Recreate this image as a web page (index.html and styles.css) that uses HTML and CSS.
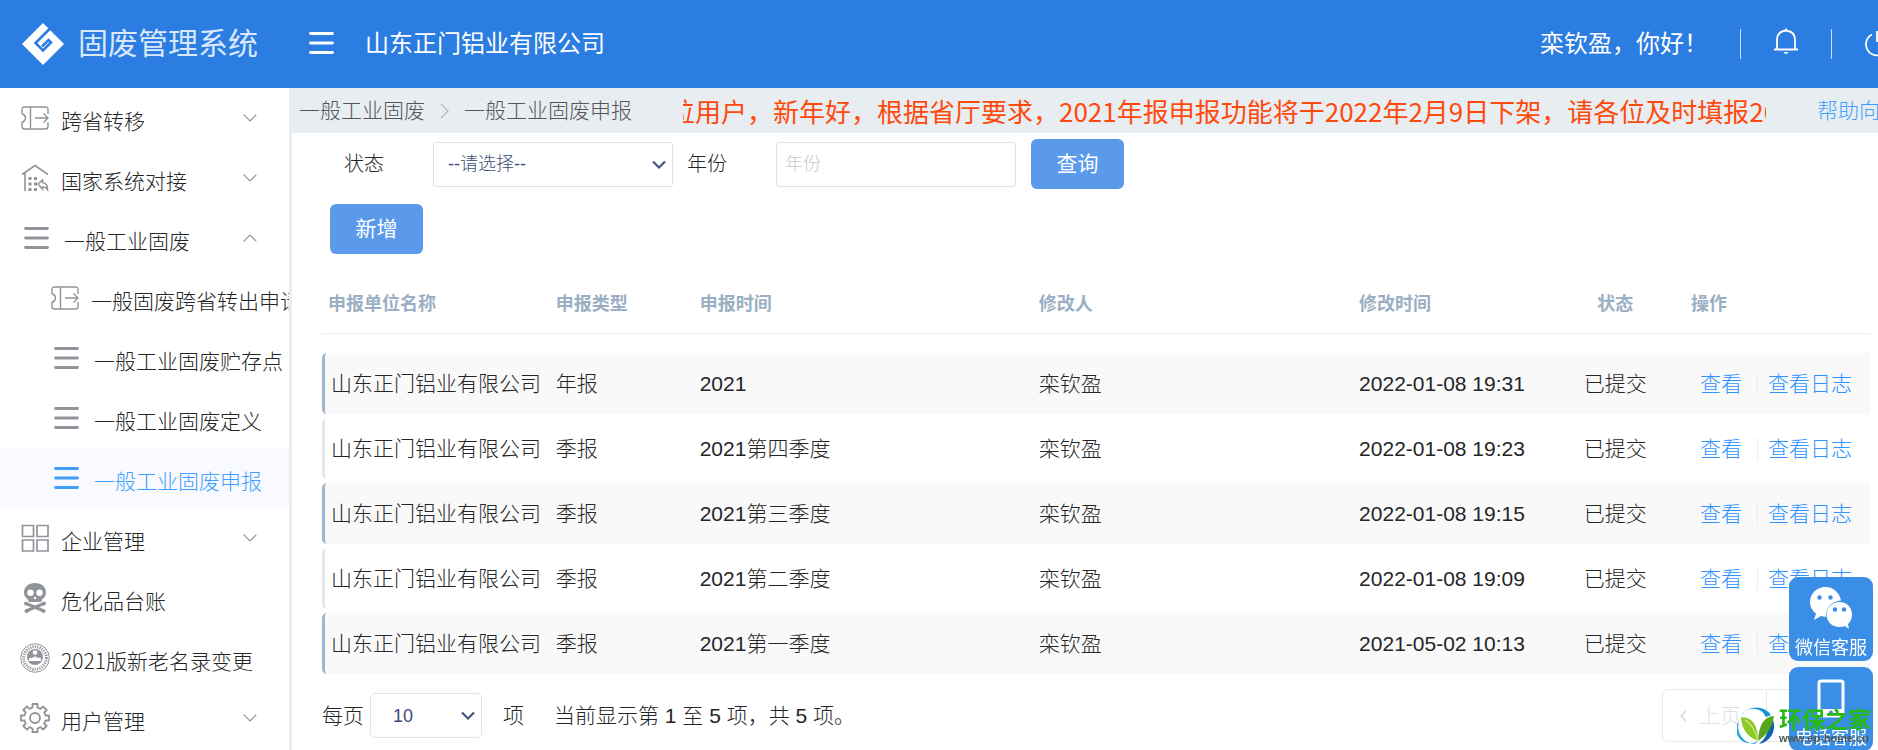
FILE: index.html
```html
<!DOCTYPE html>
<html lang="zh-CN">
<head>
<meta charset="utf-8">
<title>固废管理系统</title>
<link rel="stylesheet" href="styles.css">
</head>
<body>
<svg class="defs" aria-hidden="true">
  <symbol id="i-ticket" viewBox="0 0 28 24"><path d="M27 8V3.500Q27 1 24.500 1h-21Q1 1 1 3.500v4Q4.500 9 4.500 12T1 16.500v4Q1 23 3.500 23h21q2.500 0 2.500-2.500V16M9.500 1v22M14 12h13M22.500 7.500 27 12l-4.500 4.500" fill="none" stroke="currentColor" stroke-width="1.400"/></symbol>
  <symbol id="i-bars" viewBox="0 0 25 24"><path d="M1.500 2.500h22M1.500 12h22M1.500 21.500h22" fill="none" stroke="currentColor" stroke-width="2.800" stroke-linecap="round"/></symbol>
  <symbol id="i-down" viewBox="0 0 14 8"><path d="m.7.7 6.300 6.300L13.300.7" fill="none" stroke="currentColor" stroke-width="1.200"/></symbol>
  <symbol id="i-up" viewBox="0 0 14 8"><path d="M.7 7.300 7 1l6.300 6.300" fill="none" stroke="currentColor" stroke-width="1.200"/></symbol>
  <symbol id="i-caret" viewBox="0 0 14 9"><path d="m1 1.500 6 6 6-6" fill="none" stroke="currentColor" stroke-width="2.200"/></symbol>
</svg>

<header class="header">
  <svg class="logo" viewBox="0 0 42 42" aria-hidden="true"><path d="M21 0 42 21 21 42 0 21Z" fill="#fff"/><path d="M28 5.500 13.500 20 21 27.500 29 19.500 26.500 17 20 23.500" fill="none" stroke="#2b7de1" stroke-width="2.600"/></svg>
  <h1 class="brand">固废管理系统</h1>
  <button class="toggle" aria-label="菜单"><svg viewBox="0 0 25 24"><use href="#i-bars"/></svg></button>
  <span class="company">山东正门铝业有限公司</span>
  <div class="account">
    <span>栾钦盈，你好！</span>
    <i class="rule"></i>
    <button class="bell" aria-label="通知"><svg viewBox="0 0 26 28"><path d="M1 21.500h24M4 21V12q0-8.500 9-9.500 9 1 9 9.500v9M13 .5v2" fill="none" stroke="currentColor" stroke-width="1.800"/><path d="M10.500 24h5q-1 2-2.500 2t-2.500-2Z" fill="currentColor"/></svg></button>
    <i class="rule"></i>
    <button class="power" aria-label="退出"><svg viewBox="0 0 26 26"><path d="M8 3.500a11 11 0 1 0 10 0M13 0v11" fill="none" stroke="currentColor" stroke-width="1.800"/></svg></button>
  </div>
</header>

<div class="page">
  <nav class="sidebar">
    <a class="item" href="#"><svg class="ticket"><use href="#i-ticket"/></svg><span>跨省转移</span><svg class="arrow"><use href="#i-down"/></svg></a>
    <a class="item" href="#"><svg class="icon" viewBox="0 0 28 28"><path d="M1 10.500 14 1.500l13 9M4 9v18" fill="none" stroke="currentColor" stroke-width="1.600"/><path d="M7.500 13h3v3h-3zm5.500 0h3v3h-3zm-5.500 5.500h3v3h-3zm5.500 0h3v3h-3zM7.500 24h3v3h-3zm5.500 0h3v3h-3z" fill="currentColor"/><path d="m17 20 4.500-4v2.500q5 .5 5 7-2-3-5-2.500V25Z" fill="none" stroke="currentColor" stroke-width="1.500"/></svg><span>国家系统对接</span><svg class="arrow"><use href="#i-down"/></svg></a>
    <a class="item menu" href="#"><svg class="bars"><use href="#i-bars"/></svg><span>一般工业固废</span><svg class="arrow"><use href="#i-up"/></svg></a>
    <a class="item sub" href="#"><svg class="ticket"><use href="#i-ticket"/></svg><span>一般固废跨省转出申请</span></a>
    <a class="item menu sub" href="#"><svg class="bars"><use href="#i-bars"/></svg><span>一般工业固废贮存点</span></a>
    <a class="item menu sub" href="#"><svg class="bars"><use href="#i-bars"/></svg><span>一般工业固废定义</span></a>
    <a class="item menu sub active" href="#"><svg class="bars"><use href="#i-bars"/></svg><span>一般工业固废申报</span></a>
    <a class="item" href="#"><svg class="icon" viewBox="0 0 28 28"><path d="M1.500 1.500h11v11h-11zm14.500 0h11v11H16zM1.500 16h11v11h-11zM16 16h11v11H16z" fill="none" stroke="currentColor" stroke-width="1.700"/></svg><span>企业管理</span><svg class="arrow"><use href="#i-down"/></svg></a>
    <a class="item" href="#"><svg class="icon tall" viewBox="0 0 28 30"><path fill="currentColor" fill-rule="evenodd" d="M14 0C7.500 0 3 4 3 9.500c0 3 1.200 5 3.500 6.500L8 19h12l1.500-3c2.300-1.500 3.500-3.500 3.500-6.500C25 4 20.500 0 14 0ZM9.500 6.500a3.200 3.200 0 1 1 0 6.400 3.200 3.200 0 0 1 0-6.400Zm9 0a3.200 3.200 0 1 1 0 6.400 3.200 3.200 0 0 1 0-6.400ZM14 13l1.500 3h-3Z"/><path d="m5 20.500 18 7.500M23 20.500 5 28" stroke="currentColor" stroke-width="3"/><circle cx="5" cy="20.500" r="2" fill="currentColor"/><circle cx="23" cy="20.500" r="2" fill="currentColor"/><circle cx="5.500" cy="28" r="2" fill="currentColor"/><circle cx="22.500" cy="28" r="2" fill="currentColor"/></svg><span>危化品台账</span></a>
    <a class="item" href="#"><svg class="icon large" viewBox="0 0 30 30"><circle cx="15" cy="15" r="14.300" fill="none" stroke="currentColor" stroke-width="1"/><circle cx="15" cy="15" r="11.300" fill="none" stroke="currentColor" stroke-width="3" stroke-dasharray="1.200 1.200"/><circle cx="15" cy="14" r="8" fill="currentColor"/><circle cx="15" cy="9.500" r="2.300" fill="#fff"/><path d="M9 18v-2.500l1.500-1 1.500 1 1-2 1 1.500 1-2.500 1 2.500 1-1.500 1 2 1.500-1 1.500 1V18Z" fill="#fff"/></svg><span>2021版新老名录变更</span></a>
    <a class="item" href="#"><svg class="icon large" viewBox="0 0 30 30"><path d="M12.500 1h5v3.500l3 1.300L23 3.300 26.700 7l-2.500 2.500 1.300 3H29v5h-3.500l-1.300 3 2.500 2.500-3.700 3.700-2.500-2.500-3 1.300V29h-5v-3.500l-3-1.300L7 26.700 3.300 23l2.500-2.500-1.300-3H1v-5h3.500l1.300-3L3.300 7 7 3.300l2.500 2.500 3-1.300Z" fill="none" stroke="currentColor" stroke-width="1.800" stroke-linejoin="round"/><circle cx="15" cy="15" r="5" fill="none" stroke="currentColor" stroke-width="1.800"/></svg><span>用户管理</span><svg class="arrow"><use href="#i-down"/></svg></a>
  </nav>

  <main class="content">
    <div class="topbar">
      <a href="#">一般工业固废</a>
      <svg class="sep" viewBox="0 0 9 16"><path d="m1 1 7 7-7 7" fill="none" stroke="currentColor" stroke-width="1.300"/></svg>
      <a href="#">一般工业固废申报</a>
      <div class="notice"><p>位用户，新年好，根据省厅要求，2021年报申报功能将于2022年2月9日下架，请各位及时填报20</p></div>
      <a class="help" href="#">帮助向</a>
    </div>

    <div class="body">
      <form class="filters">
        <label for="state">状态</label>
        <div class="select"><select id="state"><option>--请选择--</option></select><svg><use href="#i-caret"/></svg></div>
        <label for="year">年份</label>
        <input id="year" type="text" placeholder="年份">
        <button class="btn" type="button">查询</button>
      </form>
      <button class="btn add" type="button">新增</button>

      <table class="table">
        <colgroup><col class="c-name"><col class="c-type"><col class="c-time"><col class="c-user"><col class="c-date"><col class="c-state"><col></colgroup>
        <thead><tr><th>申报单位名称</th><th>申报类型</th><th>申报时间</th><th>修改人</th><th>修改时间</th><th>状态</th><th>操作</th></tr></thead>
        <tbody>
          <tr><td>山东正门铝业有限公司</td><td>年报</td><td>2021</td><td>栾钦盈</td><td>2022-01-08 19:31</td><td>已提交</td><td><div class="ops"><a href="#">查看</a><a href="#">查看日志</a></div></td></tr>
          <tr><td>山东正门铝业有限公司</td><td>季报</td><td>2021第四季度</td><td>栾钦盈</td><td>2022-01-08 19:23</td><td>已提交</td><td><div class="ops"><a href="#">查看</a><a href="#">查看日志</a></div></td></tr>
          <tr><td>山东正门铝业有限公司</td><td>季报</td><td>2021第三季度</td><td>栾钦盈</td><td>2022-01-08 19:15</td><td>已提交</td><td><div class="ops"><a href="#">查看</a><a href="#">查看日志</a></div></td></tr>
          <tr><td>山东正门铝业有限公司</td><td>季报</td><td>2021第二季度</td><td>栾钦盈</td><td>2022-01-08 19:09</td><td>已提交</td><td><div class="ops"><a href="#">查看</a><a href="#">查看日志</a></div></td></tr>
          <tr><td>山东正门铝业有限公司</td><td>季报</td><td>2021第一季度</td><td>栾钦盈</td><td>2021-05-02 10:13</td><td>已提交</td><td><div class="ops"><a href="#">查看</a><a href="#">查看日志</a></div></td></tr>
        </tbody>
      </table>

      <div class="footer">
        <label for="size">每页</label>
        <div class="select size"><select id="size"><option>10</option></select><svg><use href="#i-caret"/></svg></div>
        <span>项</span>
        <span class="summary">当前显示第 1 至 5 项，共 5 项。</span>
        <div class="pager"><button type="button" disabled><svg viewBox="0 0 8 12"><path d="M7 1 2 6l5 5" fill="none" stroke="currentColor" stroke-width="1.800"/></svg>上页</button><button type="button" disabled aria-label="下页"></button></div>
      </div>
    </div>
  </main>
</div>

<aside class="service">
  <button type="button"><svg viewBox="0 0 42 42"><path d="M15.500 0C7 0 0 6.500 0 15c0 5 2.200 8.800 6 11.500L4 33l7-4q2 .8 5 .8C15.500 20 22 14 31 13.500 29.500 5.500 23.500 0 15.500 0Z" fill="#fff"/><path d="M29.500 15C22 15 16.500 20.500 16.500 27.500S22 40 29.500 40q3 0 5.500-1l4 3-1-5c2.500-2 4-5.500 4-9.500C42 20.500 37 15 29.500 15Z" fill="#fff"/><g fill="#3a8ee6"><circle cx="9.500" cy="10.500" r="2.200"/><circle cx="20.500" cy="10.500" r="2.200"/><circle cx="25" cy="22.500" r="2.200"/><circle cx="34" cy="22.500" r="2.200"/></g></svg>微信客服</button>
  <button type="button"><svg viewBox="0 0 42 42"><rect x="9" y="4" width="24" height="35" rx="2" fill="none" stroke="#fff" stroke-width="3"/><path d="M9 32h24v7H9z" fill="#fff"/><circle cx="21" cy="35.500" r="2" fill="#3a8ee6"/></svg>电话客服</button>
</aside>

<div class="mark">
  <svg viewBox="0 0 38 38" aria-hidden="true"><path d="M4 9A18 18 0 0 1 34 8L29 10A14 14 0 0 0 4 9Z" fill="#1793d6"/><path d="M2 14a17.500 17.500 0 0 0 16 23l3-3A14 14 0 0 1 2 14Z" fill="#25a8df"/><path d="M36 13a18 18 0 0 1-14 24q9-7 10-20Z" fill="#0d62ae"/><path d="M4 10q17 0 17 24Q5 28 4 10Z" fill="#8dc82a"/><path d="M37 9q-15 1-16 25Q35 25 37 9Z" fill="#55a61c"/><path d="M8 13q9 5 13 21" fill="none" stroke="#d7ec8e" stroke-width="1.200"/></svg>
  <div><strong>环保之家</strong><small>www.ep-home.cn</small></div>
</div>
</body>
</html>
```
FILE: styles.css
```css
* { box-sizing: border-box; }

body {
  margin: 0;
  min-height: 100vh;
  display: flex;
  flex-direction: column;
  overflow: hidden;
  background: #fff;
  color: #242526;
  font: 300 21px/30px "Liberation Sans", "Noto Sans CJK SC", sans-serif;
}

a { color: inherit; text-decoration: none; }
button, input, select { font: inherit; }
button { padding: 0; border: 0; background: none; color: inherit; }
.defs { display: none; }

/* header */
.header {
  display: flex;
  align-items: center;
  height: 88px;
  padding-left: 22px;
  overflow: hidden;
  background: #2b7de1;
  color: #fff;
  font-size: 24px;
  font-weight: 400;
  white-space: nowrap;
}
.logo { width: 42px; height: 42px; }
.brand { margin: 0 0 0 14px; color: #d9e8fb; font-size: 30px; font-weight: 400; }
.toggle { margin: 0 31px 2px 51px; height: 24px; }
.toggle svg { display: block; width: 25px; height: 24px; }
.account { display: flex; align-items: center; gap: 32px; margin: 0 -12px 0 auto; }
.rule { width: 1px; height: 30px; background: #cfe1f8; }
.bell svg { display: block; width: 26px; height: 28px; margin-bottom: 4px; }
.power svg { display: block; width: 26px; height: 26px; }

/* layout */
.page { flex: 1; display: flex; }
.sidebar { flex: none; width: 289px; overflow: hidden; font-family: "Noto Sans CJK SC", sans-serif; }
.content { flex: 1; min-width: 0; display: flex; flex-direction: column; }

/* sidebar */
.item {
  display: flex;
  align-items: center;
  height: 60px;
  padding: 0 32px 0 21px;
  gap: 12px;
  white-space: nowrap;
}
.item span { padding-top: 4px; }
.item svg { flex: none; color: #909399; }
.item .arrow { width: 14px; height: 8px; margin-left: auto; }
.ticket { width: 28px; height: 24px; }
.bars { width: 25px; height: 24px; }
.icon { width: 28px; height: 28px; }
.icon.tall { height: 30px; }
.icon.large { width: 30px; height: 30px; margin: 0 -1px; }
.item.menu { padding-left: 24px; gap: 15px; }
.item.sub { padding-left: 51px; }
.item.menu.sub { padding-left: 54px; padding-right: 0; }
.item.active { background: #f8faff; color: #409eff; }
.item.active svg { color: #409eff; }

/* breadcrumb and notice */
.topbar {
  display: flex;
  align-items: center;
  height: 45px;
  padding-left: 10px;
  overflow: hidden;
  background: #e8edf1;
  color: #54565a;
  white-space: nowrap;
}
.sep { width: 9px; height: 16px; margin: 0 15px; color: #b4bac4; }
.notice { flex: 1; min-width: 0; margin: 0 51px; overflow: hidden; color: #ff4a0c; font-family: "Noto Sans CJK SC", sans-serif; font-size: 26px; font-weight: 400; }
.notice p { margin: 0; text-indent: -14px; }
.help { width: 61px; color: #409eff; }

/* filters */
.body { flex: 1; padding: 6px 8px 0 30px; border-left: 3px solid #e8edf1; }
.filters { display: flex; align-items: center; padding-left: 22px; font-size: 20px; }
.filters label { width: 89px; }
.filters input, .select select {
  width: 240px;
  height: 45px;
  border: 1px solid #dfe1ea;
  border-radius: 3px;
  background: #fff;
  font-size: 18px;
}
.filters input { padding: 0 8px; margin-right: 15px; outline: 0; }
.filters input::placeholder { color: #c8c8c8; }
.select { position: relative; margin-right: 14px; }
.select select { display: block; padding: 0 14px; appearance: none; color: #3c4b75; }
.select svg { position: absolute; right: 7px; top: 18px; width: 14px; height: 9px; color: #46557f; pointer-events: none; }
.btn { width: 93px; height: 50px; border-radius: 6px; background: #5b9aeb; color: #fff; font-size: 21px; font-weight: 400; }
.add { display: block; margin: 15px 0 16px 8px; }

/* table */
.table { width: 100%; table-layout: fixed; border-spacing: 0 4px; }
.c-name { width: 15.1%; }
.c-type { width: 9.3%; }
.c-time { width: 21.9%; }
.c-user { width: 20.7%; }
.c-date { width: 12.7%; }
.c-state { width: 7.7%; }
.table th { height: 60px; padding: 0; border-bottom: 1px solid #ebeef0; color: #9aafc3; font-size: 18px; font-weight: 700; text-align: left; }
.table td { height: 61px; padding: 0; white-space: nowrap; }
.table th:first-child { padding-left: 6px; }
.table th:nth-child(6), .table td:nth-child(6) { text-align: center; }
.table th:last-child { padding-left: 16px; }
.table td:last-child { padding-left: 25px; }
.table td:first-child { padding-left: 6px; border-left: 3px solid #e2e8f0; border-radius: 5px 0 0 5px; }
.table tbody::before { content: ""; display: table-row; height: 11px; }
.table tr:nth-child(odd) td { background: #f9f9f9; }
.table tr:nth-child(odd) td:first-child { border-color: #a3b6c9; }
.ops { display: flex; align-items: center; line-height: 23px; color: #2f94ff; }
.ops a + a { margin-left: 15px; padding-left: 10px; border-left: 1px solid #ebeef0; }

/* table footer */
.footer { display: flex; align-items: center; padding-top: 11px; }
.footer .size { margin: 0 21px 0 6px; }
.size select { width: 112px; padding: 0 22px; border-color: #dde5ec; border-radius: 5px; }
.summary { margin-left: 30px; }
.pager { display: flex; width: 208px; height: 53px; margin-left: auto; border: 1px solid #e8ebee; border-radius: 6px; color: #dde1e6; }
.pager button { flex: 1; display: flex; align-items: center; padding-left: 16px; gap: 12px; color: inherit; }
.pager button + button { border-left: 1px solid #e8ebee; }
.pager svg { width: 8px; height: 12px; }

/* floating service buttons */
.service { position: fixed; right: 5px; bottom: -1px; display: flex; flex-direction: column; gap: 6px; }
.service button {
  display: flex;
  flex-direction: column;
  align-items: center;
  gap: 8px;
  width: 84px;
  height: 84px;
  padding-top: 10px;
  border-radius: 9px;
  background: #3a8ee6;
  color: #fff;
  font-size: 18px;
  font-weight: 400;
  line-height: 22px;
  white-space: nowrap;
}
.service svg { flex: none; width: 42px; height: 42px; }

.mark { position: fixed; right: 7px; bottom: 5px; display: flex; align-items: center; gap: 4px; pointer-events: none; }
.mark svg { width: 38px; height: 38px; }
.mark div { display: flex; flex-direction: column; }
.mark strong { color: #25b912; font-size: 23px; font-weight: 700; line-height: 24px; }
.mark small { color: #4c5a55; font-size: 11px; font-weight: 700; line-height: 12px; }
```
